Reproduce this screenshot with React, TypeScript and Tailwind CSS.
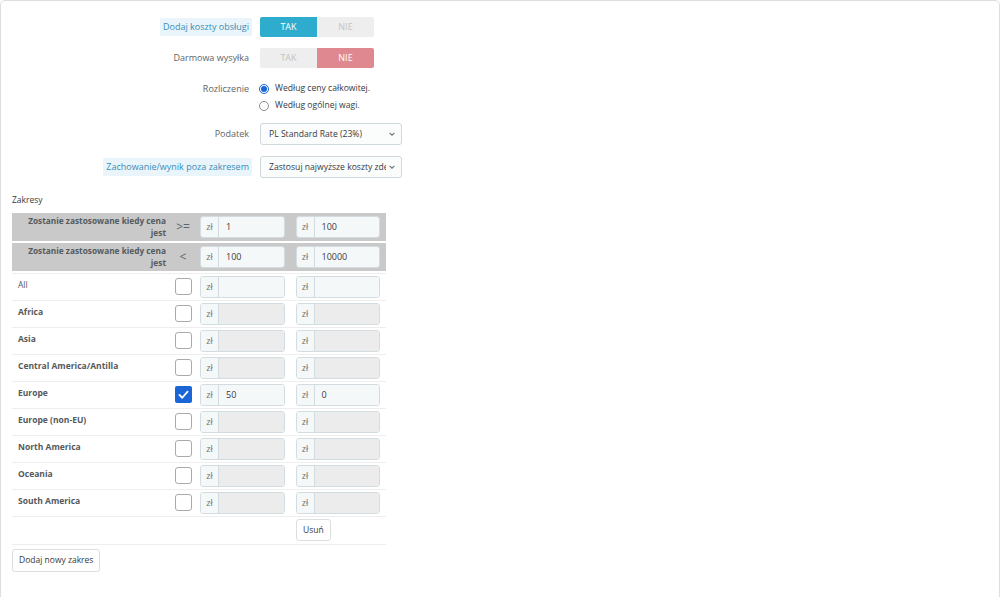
import React from "react";

type Zone = { name: string; checked?: boolean; enabled?: boolean; from?: string; to?: string; bold?: boolean };

const ZONES: Zone[] = [
  { name: "All", enabled: true, bold: false },
  { name: "Africa", bold: true },
  { name: "Asia", bold: true },
  { name: "Central America/Antilla", bold: true },
  { name: "Europe", checked: true, enabled: true, from: "50", to: "0", bold: true },
  { name: "Europe (non-EU)", bold: true },
  { name: "North America", bold: true },
  { name: "Oceania", bold: true },
  { name: "South America", bold: true },
];

function Label({ children, help }: { children: React.ReactNode; help?: boolean }) {
  return (
    <div className="flex w-[251px] shrink-0 justify-end">
      {help ? (
        <span className="rounded-[2px] bg-[#e9f5fa] px-[3px] py-[2px] text-[#3a8cb8]">{children}</span>
      ) : (
        <span className="px-[3px] text-[#5e6468]">{children}</span>
      )}
    </div>
  );
}

function Toggle({ on }: { on: boolean }) {
  return (
    <div className="flex h-[20px] w-[114px] overflow-hidden rounded-[2px] text-[9px] font-medium">
      <div
        className={
          on
            ? "flex flex-1 items-center justify-center bg-[#2eaccd] text-white"
            : "flex flex-1 items-center justify-center bg-[#eeeeee] text-[#c4c4c4]"
        }
      >
        TAK
      </div>
      <div
        className={
          on
            ? "flex flex-1 items-center justify-center bg-[#eeeeee] text-[#c4c4c4]"
            : "flex flex-1 items-center justify-center bg-[#e0888f] text-white"
        }
      >
        NIE
      </div>
    </div>
  );
}

function Select({ value }: { value: string }) {
  return (
    <div className="flex h-[22px] w-[142px] items-center justify-between rounded-[3px] border border-[#cfd8dc] bg-[#fbfcfc] pl-[8px] pr-[5px] text-[8.6px] text-[#363a41]">
      <span className="overflow-hidden whitespace-nowrap">{value}</span>
      <svg width="8" height="8" viewBox="0 0 10 10" className="ml-[2px] shrink-0">
        <path d="M2 3.5 L5 6.5 L8 3.5" fill="none" stroke="#6c7377" strokeWidth="1.3" />
      </svg>
    </div>
  );
}

function Money({ value, disabled }: { value?: string; disabled?: boolean }) {
  return (
    <div className="flex h-[22px] w-[85px] overflow-hidden rounded-[3px] border border-[#d3dde1] text-[9px]">
      <div className="flex w-[18px] shrink-0 items-center justify-center border-r border-[#d3dde1] bg-[#f5f8f9] text-[#6c7377]">
        zł
      </div>
      <div
        className={
          disabled
            ? "flex flex-1 items-center bg-[#ececec] pl-[7px] text-[#363a41]"
            : "flex flex-1 items-center bg-[#f5f8f9] pl-[7px] text-[#363a41]"
        }
      >
        {value}
      </div>
    </div>
  );
}

function Check({ checked }: { checked?: boolean }) {
  if (checked)
    return (
      <div className="flex h-[17px] w-[17px] items-center justify-center rounded-[2px] bg-[#1a66d6]">
        <svg width="13" height="13" viewBox="0 0 16 16">
          <path d="M3 8.5 L6.5 12 L13 4.5" fill="none" stroke="white" strokeWidth="2.2" strokeLinecap="round" strokeLinejoin="round" />
        </svg>
      </div>
    );
  return <div className="h-[17px] w-[17px] rounded-[3px] border border-[#a7abad] bg-white" />;
}

function Radio({ checked, label }: { checked?: boolean; label: string }) {
  return (
    <div className="flex h-[15px] items-center gap-[6px] text-[8.6px] text-[#363a41]">
      {checked ? (
        <span className="flex h-[10px] w-[10px] items-center justify-center rounded-full border border-[#1a66d6]">
          <span className="h-[6px] w-[6px] rounded-full bg-[#1a66d6]" />
        </span>
      ) : (
        <span className="h-[10px] w-[10px] rounded-full border border-[#8a8f92] bg-white" />
      )}
      <span>{label}</span>
    </div>
  );
}

function HeaderRow({ op, from, to }: { op: string; from: string; to: string }) {
  return (
    <div className="flex h-[28px] items-center bg-[#c9c9c9] px-[6px]">
      <div className="w-[148px] shrink-0 text-right text-[8.3px] font-bold leading-[12px] text-[#555a5e]">
        Zostanie zastosowane kiedy cena jest
      </div>
      <div className="w-[34px] shrink-0 text-center text-[12px] text-[#606569]">{op}</div>
      <Money value={from} />
      <div className="w-[11px] shrink-0" />
      <Money value={to} />
    </div>
  );
}

export default function App() {
  return (
    <div className="h-[597px] w-full overflow-hidden bg-white" style={{ fontFamily: '"Open Sans", "Noto Sans", sans-serif' }}>
      <div className="h-[620px] w-full rounded-[5px] border border-[#dcdedf] bg-white text-[9px]">
        <div className="flex flex-col pt-[16px]">
          <div className="flex items-center gap-[8px]">
            <Label help>Dodaj koszty obsługi</Label>
            <Toggle on />
          </div>
          <div className="mt-[11px] flex items-center gap-[8px]">
            <Label>Darmowa wysyłka</Label>
            <Toggle on={false} />
          </div>
          <div className="mt-[13px] flex items-start gap-[8px]">
            <div className="flex h-[15px] w-[251px] shrink-0 items-center justify-end">
              <span className="px-[3px] text-[#5e6468]">Rozliczenie</span>
            </div>
            <div className="-ml-[1px] flex flex-col gap-[2px]">
              <Radio checked label="Według ceny całkowitej." />
              <Radio label="Według ogólnej wagi." />
            </div>
          </div>
          <div className="mt-[10px] flex items-center gap-[8px]">
            <Label>Podatek</Label>
            <Select value="PL Standard Rate (23%)" />
          </div>
          <div className="mt-[11px] flex items-center gap-[8px]">
            <Label help>Zachowanie/wynik poza zakresem</Label>
            <Select value="Zastosuj najwyższe koszty zdefiniowane" />
          </div>
        </div>

        <div className="mt-[16px] px-[11px]">
          <div className="mb-[6px] text-[8.5px] text-[#363a41]">Zakresy</div>
          <div className="w-[374px]">
            <HeaderRow op=">=" from="1" to="100" />
            <div className="h-[2px]" />
            <HeaderRow op="<" from="100" to="10000" />
            <div className="h-[3px] border-b border-[#eeeeee]" />
            {ZONES.map((z) => (
              <div key={z.name} className="flex h-[27px] items-center border-b border-[#eeeeee] px-[6px]">
                <div
                  className={
                    z.bold
                      ? "w-[148px] shrink-0 pb-[3px] text-[8.5px] font-bold text-[#55595c]"
                      : "w-[148px] shrink-0 pb-[3px] text-[8.5px] text-[#55595c]"
                  }
                >
                  {z.name}
                </div>
                <div className="flex w-[34px] shrink-0 justify-center">
                  <Check checked={z.checked} />
                </div>
                <Money value={z.from} disabled={!z.enabled} />
                <div className="w-[11px] shrink-0" />
                <Money value={z.to} disabled={!z.enabled} />
              </div>
            ))}
            <div className="flex h-[28px] items-center border-b border-[#eeeeee] pl-[284px]">
              <button className="h-[22px] rounded-[3px] border border-[#dcdedf] bg-white px-[6px] text-[8.5px] text-[#363a41]">
                Usuń
              </button>
            </div>
          </div>
          <button className="mt-[4px] h-[23px] rounded-[3px] border border-[#dcdedf] bg-white px-[6px] text-[8.5px] text-[#363a41]">
            Dodaj nowy zakres
          </button>
        </div>
      </div>
    </div>
  );
}
